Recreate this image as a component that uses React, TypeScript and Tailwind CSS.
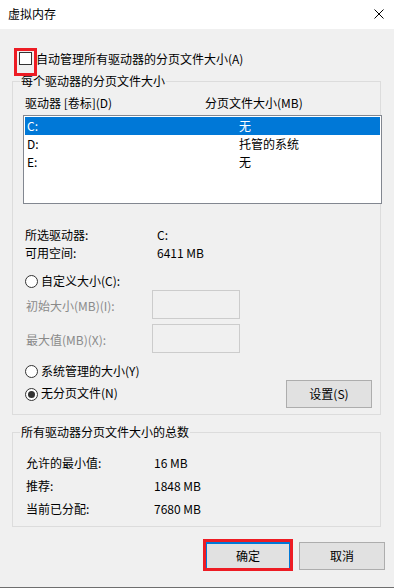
const font = "font-['Microsoft_YaHei','Noto_Sans_CJK_SC',sans-serif]";

const Radio = ({ checked }: { checked?: boolean }) => (
  <span className="w-[13px] h-[13px] rounded-full border border-[#333333] bg-white flex items-center justify-center shrink-0">
    {checked && <span className="w-[7px] h-[7px] rounded-full bg-[#333333]" />}
  </span>
);

const drives = [
  { name: "C:", size: "无", selected: true },
  { name: "D:", size: "托管的系统" },
  { name: "E:", size: "无" },
];

const totals = [
  { label: "允许的最小值:", value: "16 MB" },
  { label: "推荐:", value: "1848 MB" },
  { label: "当前已分配:", value: "7680 MB" },
];

export default function App() {
  return (
    <div className={`w-[394px] h-[588px] bg-[#f0f0f0] flex flex-col text-[12px] leading-[16px] text-black border-b border-[#6e6e6e] overflow-hidden ${font}`}>
      {/* title bar */}
      <div className="h-[29px] bg-white flex items-center justify-between pl-[8px] pr-[10px] shrink-0">
        <span className="pb-[1px]">虚拟内存</span>
        <svg width="10" height="10" viewBox="0 0 10 10" className="mb-[1px]">
          <path d="M0.5 0.5 L9.5 9.5 M9.5 0.5 L0.5 9.5" stroke="#000" strokeWidth="1" fill="none" />
        </svg>
      </div>

      {/* auto manage */}
      <div className="mt-[21px] h-[17px] pl-[19px] flex items-center">
        <span className="relative w-[13px] h-[13px] border border-[#333333] bg-white shrink-0">
          <span className="absolute -left-[6px] -top-[5px] w-[23px] h-[28px] border-[3px] border-[#ed1c24]" />
        </span>
        <span className="ml-[4px] pt-[1px]">自动管理所有驱动器的分页文件大小(A)</span>
      </div>

      {/* per drive */}
      <fieldset className="mt-[6px] ml-[12px] mr-[13px] min-w-0 border border-[#dcdcdc]">
        <legend className="ml-[7px] px-[1px] leading-[16px]">每个驱动器的分页文件大小</legend>
        <div className="pl-[11px] pb-[6px] flex flex-col">
          <div className="mt-[6px] h-[16px] flex items-center pl-[1px]">
            <span className="w-[180px]">驱动器 [卷标](D)</span>
            <span>分页文件大小(MB)</span>
          </div>
          <div className="mt-[4px] -ml-[1px] w-[359px] h-[89px] border border-[#828790] bg-white p-[1px]">
            {drives.map((d) => (
              <div
                key={d.name}
                className={`h-[18px] flex items-center pl-[2px] ${d.selected ? "bg-[#0078d7] text-white" : ""}`}
              >
                <span className="w-[212px]">{d.name}</span>
                <span>{d.size}</span>
              </div>
            ))}
          </div>

          <div className="mt-[22px] h-[18px] flex items-center pl-[1px]">
            <span className="w-[132px]">所选驱动器:</span>
            <span>C:</span>
          </div>
          <div className="h-[18px] flex items-center pl-[1px]">
            <span className="w-[132px]">可用空间:</span>
            <span>6411 MB</span>
          </div>

          <div className="mt-[10px] h-[18px] flex items-center pl-[1px] gap-[3px]">
            <Radio />
            <span>自定义大小(C):</span>
          </div>
          <div className="h-[29px] flex items-center pl-[2px]">
            <span className="w-[126px] pt-[3px] text-[#8a8a8a]">初始大小(MB)(I):</span>
            <span className="w-[88px] h-[29px] border border-[#cccccc] bg-[#f0f0f0]" />
          </div>
          <div className="mt-[5px] h-[29px] flex items-center pl-[2px]">
            <span className="w-[126px] pt-[2px] text-[#8a8a8a]">最大值(MB)(X):</span>
            <span className="w-[88px] h-[29px] border border-[#cccccc] bg-[#f0f0f0]" />
          </div>

          <div className="mt-[9px] h-[18px] flex items-center pl-[1px] gap-[3px]">
            <Radio />
            <span>系统管理的大小(Y)</span>
          </div>
          <div className="h-[28px] flex items-center pl-[1px]">
            <Radio checked />
            <span className="ml-[3px] mb-[2px]">无分页文件(N)</span>
            <button className="ml-auto mr-[8px] w-[86px] h-[28px] border border-[#adadad] bg-[#e1e1e1] flex items-center justify-center">
              设置(S)
            </button>
          </div>
        </div>
      </fieldset>

      {/* totals */}
      <fieldset className="mt-[9px] ml-[12px] mr-[13px] min-w-0 border border-[#dcdcdc]">
        <legend className="ml-[7px] px-[1px] leading-[16px]">所有驱动器分页文件大小的总数</legend>
        <div className="pl-[13px] pb-[6px] mt-[11px] flex flex-col">
          {totals.map((t) => (
            <div key={t.label} className="h-[23px] flex items-center">
              <span className="w-[128px]">{t.label}</span>
              <span>{t.value}</span>
            </div>
          ))}
        </div>
      </fieldset>

      {/* buttons */}
      <div className="mt-[15px] flex justify-end gap-[8px] pr-[9px]">
        <button className="relative w-[86px] h-[28px] border-2 border-[#0078d7] bg-[#e1e1e1] flex items-center justify-center">
          确定
          <span className="absolute -left-[4px] -top-[5px] w-[90px] h-[32px] border-[3px] border-[#ed1c24]" />
        </button>
        <button className="w-[86px] h-[28px] border border-[#adadad] bg-[#e1e1e1] flex items-center justify-center">
          取消
        </button>
      </div>
    </div>
  );
}
